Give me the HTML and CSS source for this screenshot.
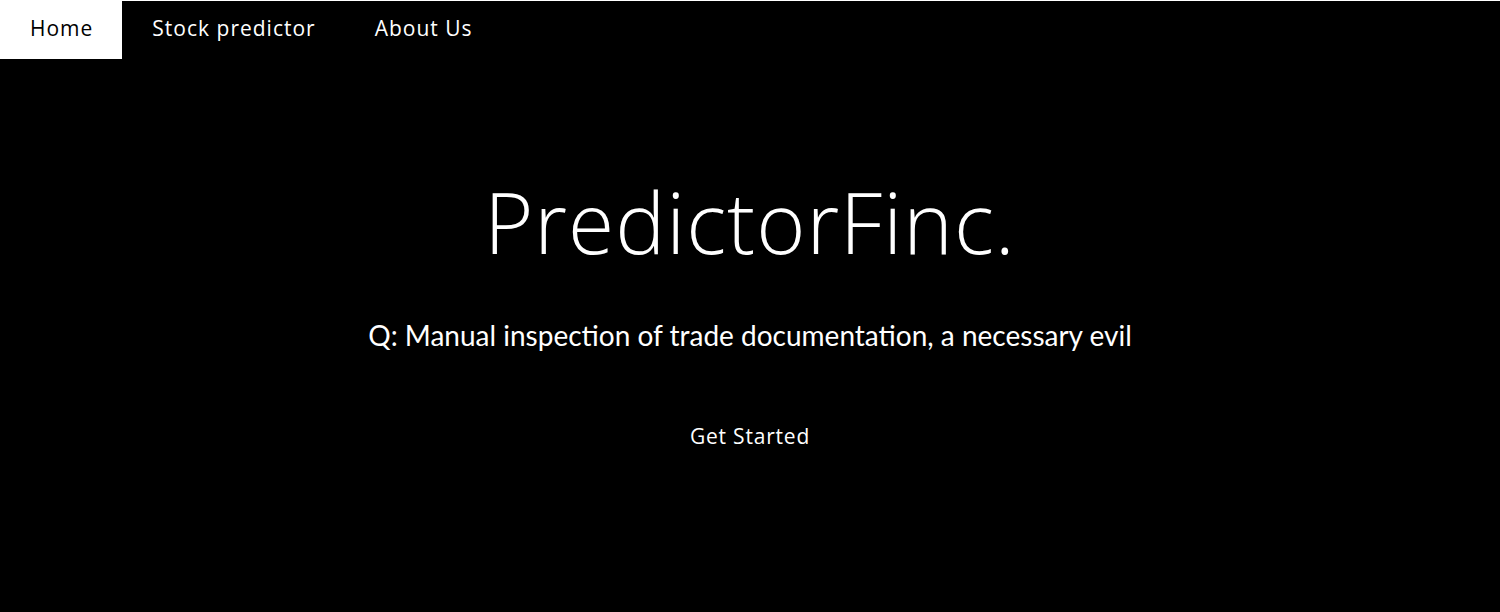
FILE: index.html
```html
<!DOCTYPE html>
<html lang="en">
<head>
<meta charset="utf-8">
<title>PredictorFinc.</title>
<link rel="stylesheet" href="styles.css">
</head>
<body>
<nav class="topnav">
  <a class="nav-link active" href="#">Home</a>
  <a class="nav-link" href="#">Stock predictor</a>
  <a class="nav-link" href="#">About Us</a>
</nav>
<main class="hero">
  <h1 class="hero-title">PredictorFinc.</h1>
  <p class="hero-sub">Q: Manual inspection of trade documentation, a necessary evil</p>
  <a class="hero-btn" href="#">Get Started</a>
</main>
</body>
</html>
```
FILE: styles.css
```css
html, body {
  margin: 0;
  padding: 0;
  background: #000;
  height: 100%;
}
body {
  border-top: 1px solid #fff;
  box-sizing: border-box;
  color: #fff;
  font-family: "Open Sans", sans-serif;
}
.topnav {
  display: flex;
  height: 58px;
}
.nav-link {
  display: flex;
  align-items: center;
  padding: 0 29px 4px 30px;
  font-size: 21px;
  color: #fff;
  text-decoration: none;
  letter-spacing: 1px;
}
.nav-link.active {
  background: #fff;
  color: #000;
}
.hero {
  display: flex;
  flex-direction: column;
  align-items: center;
  padding-top: 108px;
}
.hero-title {
  margin: 0;
  font-size: 84px;
  font-weight: 300;
  line-height: 110px;
  letter-spacing: 1px;
}
.hero-sub {
  margin: 41px 0 0;
  font-family: "Lato", sans-serif;
  font-size: 28px;
  line-height: 34px;
}
.hero-btn {
  margin-top: 70px;
  color: #fff;
  text-decoration: none;
  font-size: 21px;
  letter-spacing: 0.8px;
}
```
